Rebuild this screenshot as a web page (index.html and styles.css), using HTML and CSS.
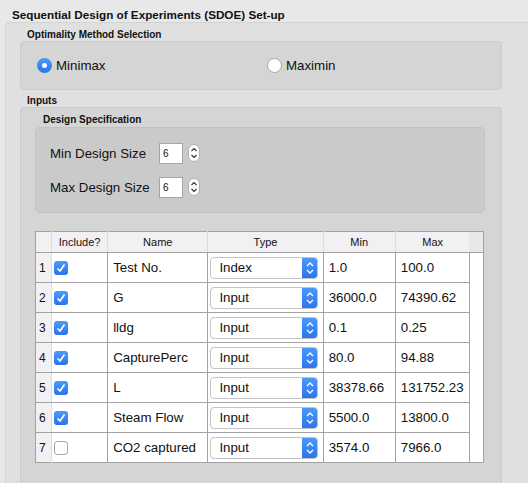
FILE: index.html
```html
<!DOCTYPE html>
<html>
<head>
<meta charset="utf-8">
<link rel="stylesheet" href="styles.css">
</head>
<body>
<div class="title">Sequential Design of Experiments (SDOE) Set-up</div>
<div class="group">
  <div class="label opt-label">Optimality Method Selection</div>
  <div class="box opt-box">
    <label class="radio-item minimax"><span class="radio on"></span>Minimax</label>
    <label class="radio-item"><span class="radio"></span>Maximin</label>
  </div>
  <div class="label inputs-label">Inputs</div>
  <div class="box inputs-box">
    <div class="label ds-label">Design Specification</div>
    <div class="ds-box">
      <div class="spin-row">
        <span class="spin-label">Min Design Size</span>
        <span class="spin-input">6</span>
        <span class="stepper"><svg width="12" height="18" viewBox="0 0 12 18"><path d="M3.5 7 L6 4.5 L8.5 7 M3.5 11 L6 13.5 L8.5 11" fill="none" stroke="#333" stroke-width="1.2"/></svg></span>
      </div>
      <div class="spin-row">
        <span class="spin-label">Max Design Size</span>
        <span class="spin-input">6</span>
        <span class="stepper"><svg width="12" height="18" viewBox="0 0 12 18"><path d="M3.5 7 L6 4.5 L8.5 7 M3.5 11 L6 13.5 L8.5 11" fill="none" stroke="#333" stroke-width="1.2"/></svg></span>
      </div>
    </div>
    <table class="grid">
      <colgroup>
        <col class="c-num"><col class="c-inc"><col class="c-name"><col class="c-type"><col class="c-min"><col class="c-max"><col class="c-fill">
      </colgroup>
      <thead>
        <tr><th></th><th>Include?</th><th>Name</th><th>Type</th><th>Min</th><th>Max</th><th class="fill"></th></tr>
      </thead>
      <tbody id="rows"></tbody>
    </table>
  </div>
</div>
<script>
var data = [
  [1,true,"Test No.","Index","1.0","100.0"],
  [2,true,"G","Input","36000.0","74390.62"],
  [3,true,"lldg","Input","0.1","0.25"],
  [4,true,"CapturePerc","Input","80.0","94.88"],
  [5,true,"L","Input","38378.66","131752.23"],
  [6,true,"Steam Flow","Input","5500.0","13800.0"],
  [7,false,"CO2 captured","Input","3574.0","7966.0"]
];
var chev = '<svg width="16" height="22" viewBox="0 0 16 22"><path d="M5 9 L8 6 L11 9 M5 13 L8 16 L11 13" fill="none" stroke="#fff" stroke-width="1.3"/></svg>';
var tick = '<svg width="14" height="14" viewBox="0 0 14 14"><path d="M3.5 7.5 L6 10 L10.5 3.5" fill="none" stroke="#fff" stroke-width="1.6"/></svg>';
var html = "";
data.forEach(function(r){
  html += '<tr><td class="num">'+r[0]+'</td>'+
    '<td class="inc"><span class="cb'+(r[1]?' on':'')+'">'+(r[1]?tick:'')+'</span></td>'+
    '<td>'+r[2]+'</td>'+
    '<td class="type"><span class="combo"><span class="combo-text">'+r[3]+'</span><span class="combo-btn">'+chev+'</span></span></td>'+
    '<td>'+r[4]+'</td><td>'+r[5]+'</td><td class="fillcell"></td></tr>';
});
document.getElementById("rows").innerHTML = html;
</script>
</body>
</html>
```
FILE: styles.css
```css
html, body {
  margin: 0;
  padding: 0;
  background: #e8e8e8;
  font-family: "Liberation Sans", Arial, sans-serif;
  color: #111;
  height: 483px;
  overflow: hidden;
}
.title {
  font-weight: bold;
  font-size: 11.7px;
  padding: 8px 0 0 12px;
  height: 14px;
  line-height: 14px;
}
.group {
  margin: 0 0 0 5px;
  width: 509px;
  height: 470px;
  border: 1px solid #d3d3d3;
  border-radius: 4px;
  background: #e0e0e0;
  padding: 0 0 0 14px;
  box-sizing: content-box;
}
.label {
  font-weight: bold;
  font-size: 10px;
  line-height: 12px;
}
.opt-label {
  padding: 6px 0 0 7px;
  height: 12px;
}
.box {
  border: 1px solid #cbcbcb;
  border-radius: 4px;
  background: #d5d5d5;
  width: 480px;
}
.opt-box {
  margin-top: 0;
  height: 47px;
  display: flex;
  align-items: center;
}
.radio-item {
  display: flex;
  align-items: center;
  font-size: 13.3px;
}
.minimax {
  margin-left: 16px;
  width: 230px;
}
.radio {
  width: 15px;
  height: 15px;
  border-radius: 50%;
  box-sizing: border-box;
  border: 1px solid #a8a8a8;
  background: #fff;
  margin-right: 4px;
  display: inline-block;
  position: relative;
}
.radio.on {
  border: none;
  background: linear-gradient(#4a9bfa, #2a74ec);
}
.radio.on::after {
  content: "";
  position: absolute;
  left: 5px;
  top: 5px;
  width: 5px;
  height: 5px;
  border-radius: 50%;
  background: #fff;
}
.inputs-label {
  padding: 5px 0 0 7px;
  height: 12px;
}
.inputs-box {
  margin-top: 0;
  height: 380px;
  border-bottom: none;
  padding-left: 14px;
  width: 466px;
}
.ds-label {
  padding: 6px 0 0 8px;
  height: 12px;
}
.ds-box {
  margin-top: 1px;
  width: 450px;
  border: 1px solid #c2c2c2;
  border-radius: 5px;
  background: #cacaca;
  display: flex;
  flex-direction: column;
  padding-top: 14px;
  box-sizing: border-box;
  height: 86px;
  gap: 12px;
}
.spin-row {
  display: flex;
  align-items: center;
  height: 22px;
  padding-left: 14px;
}
.spin-label {
  font-size: 13.3px;
  width: 109px;
}
.spin-input {
  width: 24px;
  height: 21px;
  box-sizing: border-box;
  border: 1px solid #a5a5a5;
  background: #fff;
  font-size: 10px;
  line-height: 19px;
  padding-left: 3px;
}
.stepper {
  margin-left: 5px;
  width: 12px;
  height: 18px;
  box-sizing: border-box;
  border: 1px solid #b0b0b0;
  border-radius: 6px;
  background: #fff;
  display: flex;
  align-items: center;
  justify-content: center;
  overflow: hidden;
}
.stepper svg {
  flex: none;
}
.grid {
  margin-top: 18px;
  border-collapse: collapse;
  table-layout: fixed;
  width: 449px;
  background: #fff;
  border: 1px solid #a3a3a3;
  font-size: 13.3px;
}
.c-num { width: 16px; }
.c-inc { width: 56px; }
.c-name { width: 100px; }
.c-type { width: 115px; }
.c-min { width: 72px; }
.c-max { width: 74px; }
.c-fill { width: 14px; }
.grid th {
  height: 20px;
  padding: 0;
  font-weight: normal;
  font-size: 11px;
  background: #f2f0f2;
  border-left: 1px solid #dcdcdc;
  border-bottom: 1px solid #a3a3a3;
  text-align: center;
}
.grid th:first-child { border-left: none; }
.grid th.fill { background: #e8e8e8; border-left: none; }
.grid td {
  height: 29px;
  padding: 0 0 0 5px;
  border: 1px solid #a3a3a3;
  white-space: nowrap;
  overflow: hidden;
}
.grid td.num {
  background: #f2f0f2;
  padding: 0 0 0 3px;
  border-left: none;
  border-right: 1px solid #dcdcdc;
  font-size: 12px;
}
.grid td.inc { padding-left: 2px; }
.grid td.fillcell {
  border: none;
}
.grid tr:last-child td { border-bottom: none; }
.grid td.type { padding-left: 2px; }
.cb {
  width: 14px;
  height: 14px;
  box-sizing: border-box;
  border-radius: 3px;
  border: 1px solid #a8a8a8;
  background: #fff;
  display: block;
}
.cb.on {
  border: none;
  background: linear-gradient(#4a9bfa, #2a74ec);
}
.cb svg { display: block; }
.combo {
  display: flex;
  width: 108px;
  height: 22px;
  box-sizing: border-box;
  border: 1px solid #c3c3c3;
  border-radius: 4px;
  background: #fff;
  overflow: hidden;
  align-items: stretch;
}
.combo-text {
  flex: 1;
  padding-left: 8px;
  line-height: 20px;
  font-size: 13.3px;
}
.combo-btn {
  width: 16px;
  background: linear-gradient(#4a9bfa, #2a74ec);
  display: flex;
  align-items: center;
  justify-content: center;
  margin: -1px -1px -1px 0;
}
.combo-btn svg { flex: none; }
```
